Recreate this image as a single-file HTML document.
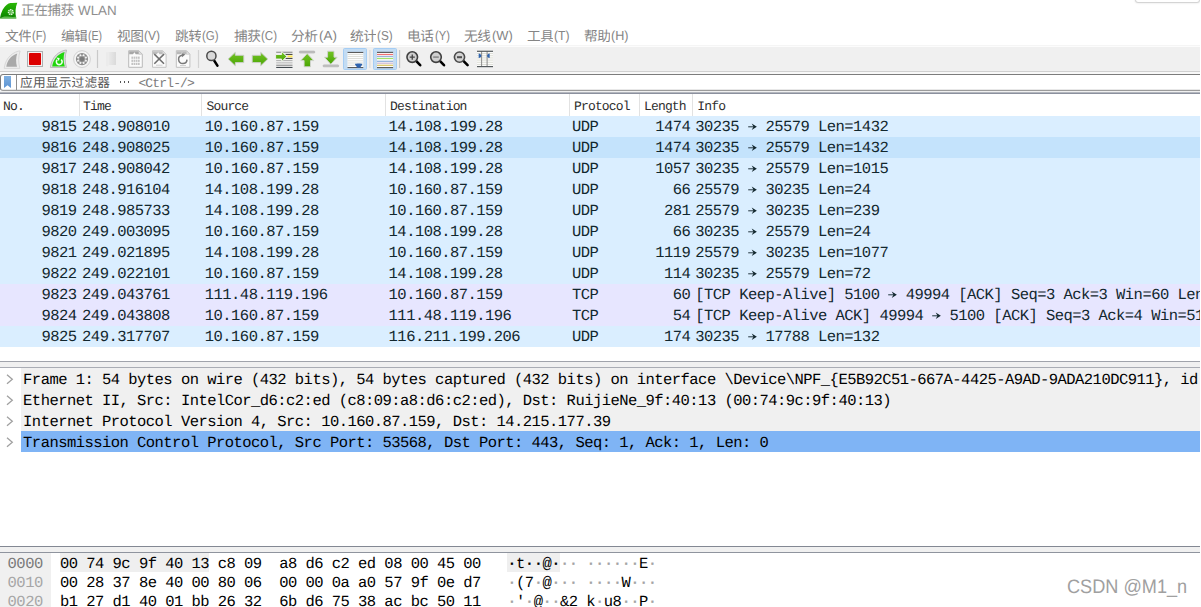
<!DOCTYPE html><html><head><meta charset="utf-8"><title>Wireshark</title><style>
*{box-sizing:border-box}
html,body{margin:0;padding:0;width:1201px;height:607px;overflow:hidden;background:#fff}
#r{position:absolute;left:0;top:0;width:1201px;height:607px;overflow:hidden;background:#fff}
body{width:1201px;height:607px;overflow:hidden;background:#fff;position:relative;font-family:"Liberation Sans",sans-serif;text-rendering:geometricPrecision}
.abs{position:absolute}
.m{font-family:"Liberation Mono",monospace;font-size:15.5px;letter-spacing:-0.535px;white-space:pre;position:absolute}
.h{font-family:"Liberation Mono",monospace;font-size:13px;letter-spacing:-0.84px;white-space:pre;position:absolute;color:#2e2e2e;top:99px;line-height:16px}
.row{position:absolute;left:0;width:1200px;height:21px;color:#12272e;overflow:hidden}
.row .m{top:0;line-height:21px;padding-top:1px}
.s{font-family:"Liberation Sans",sans-serif;position:absolute;white-space:pre}
svg text{font-family:"Liberation Sans","Noto Sans CJK SC",sans-serif}
</style></head><body><div id="r">
<svg style="position:absolute;left:21.3px;top:1.85px;" width="52.60" height="18.76" viewBox="0 -1000 3925.373134328358 1400" fill="#8e8e8e"><text x="0" y="0" font-size="1000" letter-spacing="-18.66" fill="#8e8e8e">正在捕获</text></svg>
<div class="s" style="left:78px;top:2px;font-size:13.4px;line-height:17px;color:#8e8e8e">WLAN</div>
<div class="abs" style="left:1135px;top:-8px;width:65px;height:10.5px;border:1px solid #d4d4d4;border-radius:3px;box-shadow:0 0 2px rgba(0,0,0,.15);background:#fff"></div>
<svg style="position:absolute;left:4.7px;top:26.50px;" width="26.66" height="19.74" viewBox="0 -1000 1890.7801418439717 1400" fill="#858585"><text x="0" y="0" font-size="1000" letter-spacing="-54.61" fill="#858585">文件</text></svg>
<div class="s" style="left:32.17px;top:26.6px;font-size:13.0px;line-height:17px;color:#858585;transform:scaleX(0.863);transform-origin:0 0">(F)</div>
<svg style="position:absolute;left:60.7px;top:26.50px;" width="26.66" height="19.74" viewBox="0 -1000 1890.7801418439717 1400" fill="#858585"><text x="0" y="0" font-size="1000" letter-spacing="-54.61" fill="#858585">编辑</text></svg>
<div class="s" style="left:88.17px;top:26.6px;font-size:13.0px;line-height:17px;color:#858585;transform:scaleX(0.815);transform-origin:0 0">(E)</div>
<svg style="position:absolute;left:116.9px;top:26.50px;" width="26.66" height="19.74" viewBox="0 -1000 1890.7801418439717 1400" fill="#858585"><text x="0" y="0" font-size="1000" letter-spacing="-54.61" fill="#858585">视图</text></svg>
<div class="s" style="left:144.37px;top:26.6px;font-size:13.0px;line-height:17px;color:#858585;transform:scaleX(0.925);transform-origin:0 0">(V)</div>
<svg style="position:absolute;left:174.6px;top:26.50px;" width="26.66" height="19.74" viewBox="0 -1000 1890.7801418439717 1400" fill="#858585"><text x="0" y="0" font-size="1000" letter-spacing="-54.61" fill="#858585">跳转</text></svg>
<div class="s" style="left:202.07px;top:26.6px;font-size:13.0px;line-height:17px;color:#858585;transform:scaleX(0.886);transform-origin:0 0">(G)</div>
<svg style="position:absolute;left:234.0px;top:26.50px;" width="26.66" height="19.74" viewBox="0 -1000 1890.7801418439717 1400" fill="#858585"><text x="0" y="0" font-size="1000" letter-spacing="-54.61" fill="#858585">捕获</text></svg>
<div class="s" style="left:261.47px;top:26.6px;font-size:13.0px;line-height:17px;color:#858585;transform:scaleX(0.888);transform-origin:0 0">(C)</div>
<svg style="position:absolute;left:291.09999999999997px;top:26.50px;" width="26.66" height="19.74" viewBox="0 -1000 1890.7801418439717 1400" fill="#858585"><text x="0" y="0" font-size="1000" letter-spacing="-54.61" fill="#858585">分析</text></svg>
<div class="s" style="left:318.57px;top:26.6px;font-size:13.0px;line-height:17px;color:#858585;transform:scaleX(1.035);transform-origin:0 0">(A)</div>
<svg style="position:absolute;left:349.7px;top:26.50px;" width="26.66" height="19.74" viewBox="0 -1000 1890.7801418439717 1400" fill="#858585"><text x="0" y="0" font-size="1000" letter-spacing="-54.61" fill="#858585">统计</text></svg>
<div class="s" style="left:377.17px;top:26.6px;font-size:13.0px;line-height:17px;color:#858585;transform:scaleX(0.908);transform-origin:0 0">(S)</div>
<svg style="position:absolute;left:407.3px;top:26.50px;" width="26.66" height="19.74" viewBox="0 -1000 1890.7801418439717 1400" fill="#858585"><text x="0" y="0" font-size="1000" letter-spacing="-54.61" fill="#858585">电话</text></svg>
<div class="s" style="left:434.77px;top:26.6px;font-size:13.0px;line-height:17px;color:#858585;transform:scaleX(0.862);transform-origin:0 0">(Y)</div>
<svg style="position:absolute;left:464.09999999999997px;top:26.50px;" width="26.66" height="19.74" viewBox="0 -1000 1890.7801418439717 1400" fill="#858585"><text x="0" y="0" font-size="1000" letter-spacing="-54.61" fill="#858585">无线</text></svg>
<div class="s" style="left:491.57px;top:26.6px;font-size:13.0px;line-height:17px;color:#858585;transform:scaleX(0.991);transform-origin:0 0">(W)</div>
<svg style="position:absolute;left:526.7px;top:26.50px;" width="26.66" height="19.74" viewBox="0 -1000 1890.7801418439717 1400" fill="#858585"><text x="0" y="0" font-size="1000" letter-spacing="-54.61" fill="#858585">工具</text></svg>
<div class="s" style="left:554.17px;top:26.6px;font-size:13.0px;line-height:17px;color:#858585;transform:scaleX(0.936);transform-origin:0 0">(T)</div>
<svg style="position:absolute;left:583.7px;top:26.50px;" width="26.66" height="19.74" viewBox="0 -1000 1890.7801418439717 1400" fill="#858585"><text x="0" y="0" font-size="1000" letter-spacing="-54.61" fill="#858585">帮助</text></svg>
<div class="s" style="left:611.17px;top:26.6px;font-size:13.0px;line-height:17px;color:#858585;transform:scaleX(0.971);transform-origin:0 0">(H)</div>
<div class="abs" style="left:0;top:45px;width:1200px;height:1px;background:#f5f5f5"></div>
<div class="abs" style="left:0;top:46px;width:1200px;height:1px;background:#fcfcfc"></div>
<div class="abs" style="left:0;top:47px;width:1200px;height:24px;background:#f0f0f0"></div>
<div class="abs" style="left:0;top:71px;width:1200px;height:1px;background:#d0d0d0"></div>
<svg class="abs" style="left:0;top:0" width="520" height="74" viewBox="0 0 520 74">
<defs>
<linearGradient id="gArrow" x1="0" y1="0" x2="0" y2="1"><stop offset="0" stop-color="#74c425"/><stop offset="1" stop-color="#4aa504"/></linearGradient>
<linearGradient id="gApp" x1="0" y1="0" x2="0" y2="1"><stop offset="0" stop-color="#2ab805"/><stop offset="0.75" stop-color="#119000"/><stop offset="1" stop-color="#0c7c00"/></linearGradient>
<linearGradient id="gFold" x1="0" y1="0" x2="1" y2="0"><stop offset="0" stop-color="#eaeaea"/><stop offset="1" stop-color="#dadada"/></linearGradient>
</defs>
<path d="M0 18.4C0.9 12.8 3.4 6.4 8.6 3.6C10 2.9 11 2.9 12 2.9L17.3 2.8C15.4 7.2 14.9 13 16.3 18.4Z" fill="url(#gApp)"/>
<path d="M0.3 18.4C2 16.6 5 16.2 8 16.6C11 17 14 17.2 16.2 16.6L16.3 18.4Z" fill="#7bd06a" opacity="0.75"/>
<circle cx="10.8" cy="12.1" r="2.35" fill="none" stroke="#e6f6e0" stroke-width="1.5" stroke-dasharray="1.35 0.5"/>
<circle cx="10.8" cy="12" r="1.1" fill="none" stroke="#d8f0d0" stroke-width="0.6"/>
<path d="M4.2 68.4C5 61 9.5 53.5 18.5 51.1L20.1 51C18.3 56.5 18.2 62.5 19.9 68.4Z" fill="#ededed" stroke="#d8d8d8" stroke-width="1"/>
<path d="M6.3 66.8C7.2 61 10.6 55.8 17.2 53.6C15.8 58 15.8 62.5 17 66.8Z" fill="#a9a9a9"/>
<rect x="27.5" y="51.5" width="15" height="15" fill="#f7eeee" stroke="#acb0b0" stroke-width="1"/>
<rect x="29" y="53" width="12" height="12" rx="0.8" fill="#dc0000"/>
<path d="M50.4 67.5C51.2 60 55.5 52.5 65 50.2L66.6 50.1C64.8 55.5 64.7 61.5 66.4 67.5Z" fill="#dedede" stroke="#bcbcbc" stroke-width="1"/>
<path d="M52.2 66.6C53.1 60.5 56.6 54.4 64.6 52C63.2 56.8 63.3 61.8 64.8 66.6Z" fill="#20d60c"/>
<path d="M61.2 59.6A2.9 2.9 0 1 1 57.2 59.7" fill="none" stroke="#f2fff0" stroke-width="1.55"/>
<path d="M56.3 57.6L59.6 57.9L58.9 61Z" fill="#f2fff0"/>
<circle cx="82" cy="59.1" r="8.4" fill="#f5f5f5" stroke="#d2d2d2" stroke-width="1"/>
<circle cx="82" cy="59.1" r="6.1" fill="#8d8d8d"/>
<circle cx="82" cy="59.1" r="3.5" fill="none" stroke="#b4b4b4" stroke-width="1.4"/>
<circle cx="85.97" cy="60.75" r="0.95" fill="#f6f6f6"/>
<circle cx="83.65" cy="63.07" r="0.95" fill="#f6f6f6"/>
<circle cx="80.35" cy="63.07" r="0.95" fill="#f6f6f6"/>
<circle cx="78.03" cy="60.75" r="0.95" fill="#f6f6f6"/>
<circle cx="78.03" cy="57.45" r="0.95" fill="#f6f6f6"/>
<circle cx="80.35" cy="55.13" r="0.95" fill="#f6f6f6"/>
<circle cx="83.65" cy="55.13" r="0.95" fill="#f6f6f6"/>
<circle cx="85.97" cy="57.45" r="0.95" fill="#f6f6f6"/>
<circle cx="82" cy="59.1" r="2.2" fill="#7a7a7a"/>
<rect x="96.9" y="50" width="1.2" height="18" fill="#c9c9c9"/>
<rect x="197.9" y="50" width="1.2" height="18" fill="#d2d2d2"/>
<rect x="369.29999999999995" y="50" width="1.2" height="18" fill="#dcdcdc"/>
<rect x="399.0" y="50" width="1.2" height="18" fill="#c6c6c6"/>
<path d="M108.6 52H116V65H108.8Z" fill="url(#gFold)"/>
<path d="M106 52.3L108.8 52V65L107.6 66.6L106 66Z" fill="#ebebeb"/>
<path d="M128.7 50.7H138.79999999999998L142.29999999999998 54.2V67.3H128.7Z" fill="#fbfbfb" stroke="#bababa" stroke-width="1"/>
<path d="M129.2 51.2H138.6L141.6 54.2H135.79999999999998L134.39999999999998 52.2L133.0 54.2H129.2Z" fill="#a6a6a6"/>
<path d="M138.79999999999998 50.9V54.1H142.1Z" fill="#e8e8e8" stroke="#bababa" stroke-width="0.6"/>
<rect x="131.4" y="56.6" width="1.7" height="2.2" fill="#c3c3c3"/>
<rect x="133.6" y="56.6" width="1.7" height="2.2" fill="#c3c3c3"/>
<rect x="135.8" y="56.6" width="1.7" height="2.2" fill="#c3c3c3"/>
<rect x="138.0" y="56.6" width="1.7" height="2.2" fill="#c3c3c3"/>
<rect x="131.4" y="59.7" width="1.7" height="2.2" fill="#c3c3c3"/>
<rect x="133.6" y="59.7" width="1.7" height="2.2" fill="#c3c3c3"/>
<rect x="135.8" y="59.7" width="1.7" height="2.2" fill="#c3c3c3"/>
<rect x="138.0" y="59.7" width="1.7" height="2.2" fill="#c3c3c3"/>
<rect x="131.4" y="62.8" width="1.7" height="2.2" fill="#c3c3c3"/>
<rect x="133.6" y="62.8" width="1.7" height="2.2" fill="#c3c3c3"/>
<rect x="135.8" y="62.8" width="1.7" height="2.2" fill="#c3c3c3"/>
<rect x="138.0" y="62.8" width="1.7" height="2.2" fill="#c3c3c3"/>
<path d="M152.5 50.7H162.6L166.1 54.2V67.3H152.5Z" fill="#fbfbfb" stroke="#c4c4c4" stroke-width="1"/>
<path d="M153 51.2H162.4L165.4 54.2H159.6L158.2 52.2L156.8 54.2H153Z" fill="#bdbdbd"/>
<path d="M162.6 50.9V54.1H165.9Z" fill="#e8e8e8" stroke="#c4c4c4" stroke-width="0.6"/>
<path d="M154.3 54.1L164 63.7M164 54.1L154.3 63.7" stroke="#6e6e6e" stroke-width="1.5" fill="none"/>
<path d="M156 65.2H162.5" stroke="#d0d0d0" stroke-width="1"/>
<path d="M176.3 50.7H186.4L189.9 54.2V67.3H176.3Z" fill="#fbfbfb" stroke="#c0c0c0" stroke-width="1"/>
<path d="M176.8 51.2H186.20000000000002L189.20000000000002 54.2H183.4L182.0 52.2L180.60000000000002 54.2H176.8Z" fill="#b8b8b8"/>
<path d="M186.4 50.9V54.1H189.70000000000002Z" fill="#e8e8e8" stroke="#c0c0c0" stroke-width="0.6"/>
<path d="M187 59.6A4.2 4.2 0 1 1 182 55.2" fill="none" stroke="#7a7a7a" stroke-width="1.5"/>
<path d="M181.6 52.9L185.4 54.6L182 57.2Z" fill="#7a7a7a"/>
<path d="M180 65.5H186" stroke="#d0d0d0" stroke-width="1"/>
<path d="M214.2 60.6L217.4 65.6" stroke="#000" stroke-width="2.6" stroke-linecap="round"/>
<circle cx="211.4" cy="55.9" r="4.6" fill="#d9d9d9" stroke="#4a4a4a" stroke-width="1.5"/>
<path d="M228.2 59.1L235.3 52.3V55.3H243.8V62.6H235.3V65.8Z" fill="url(#gArrow)" stroke="#cfcfcf" stroke-width="0.9" stroke-linejoin="round"/>
<path d="M267.8 59.1L260.7 52.3V55.3H252.2V62.6H260.7V65.8Z" fill="url(#gArrow)" stroke="#cfcfcf" stroke-width="0.9" stroke-linejoin="round"/>
<rect x="276.2" y="51.7" width="16.3" height="1.1" fill="#8a8a8a"/>
<rect x="285.5" y="53.9" width="7" height="1.1" fill="#4c4c4c"/>
<rect x="287.5" y="55.5" width="5" height="1.8" fill="#ffe84a"/>
<rect x="285.5" y="57.9" width="7" height="1.1" fill="#4c4c4c"/>
<rect x="276.2" y="60" width="16.3" height="1.1" fill="#b4b4b4"/>
<rect x="276.2" y="62.3" width="16.3" height="1.1" fill="#bbbbbb"/>
<rect x="276.2" y="64.7" width="16.3" height="1.1" fill="#8e8e8e"/>
<rect x="276.2" y="66.9" width="16.3" height="1.1" fill="#434a50"/>
<path d="M286.8 56.5L281.6 51.4V54.5H275.6V59H281.6V61.6Z" fill="url(#gArrow)" stroke="#f2f2f2" stroke-width="0.9" stroke-linejoin="round"/>
<rect x="299.4" y="51.1" width="15.3" height="1.9" rx="0.6" fill="#c4c4c4" stroke="#a8a8a8" stroke-width="0.6"/>
<path d="M307.2 53.6L313.7 60.6H310.5V66.8H304.1V60.6H300.8Z" fill="url(#gArrow)" stroke="#d4d4d4" stroke-width="0.9" stroke-linejoin="round"/>
<rect x="323.2" y="64.9" width="15.4" height="1.9" rx="0.6" fill="#c4c4c4" stroke="#a8a8a8" stroke-width="0.6"/>
<path d="M330.8 64.3L337.2 57.2H334V51.2H327.6V57.2H324.4Z" fill="url(#gArrow)" stroke="#d4d4d4" stroke-width="0.9" stroke-linejoin="round"/>
<rect x="343.5" y="48.5" width="23" height="21" rx="1" fill="#c3dcf3" stroke="#a5cdf4" stroke-width="1"/>
<rect x="347.5" y="52" width="15.8" height="15.6" fill="#fdfdfd"/>
<rect x="347.5" y="53.9" width="15.8" height="1" fill="#dedfd9"/>
<rect x="347.5" y="56.0" width="15.8" height="1" fill="#dedfd9"/>
<rect x="347.5" y="58.0" width="15.8" height="1" fill="#dedfd9"/>
<rect x="347.5" y="60.3" width="15.8" height="1" fill="#dedfd9"/>
<rect x="347.5" y="62.5" width="15.8" height="1" fill="#dedfd9"/>
<rect x="347.5" y="64.7" width="15.8" height="1" fill="#dedfd9"/>
<rect x="347.5" y="51.9" width="15.8" height="1.1" fill="#5a5a5a"/>
<rect x="347.5" y="67" width="15.8" height="1.1" fill="#5a5a5a"/>
<path d="M355 64.2C355 63.4 362.3 63.4 362.3 64.2C362.3 65.4 360.6 66 360.2 67.7H357.2C356.8 66 355 65.4 355 64.2Z" fill="#2f63ae"/>
<rect x="373.5" y="48.5" width="23" height="21" rx="1" fill="#c3dcf3" stroke="#a5cdf4" stroke-width="1"/>
<rect x="377" y="52" width="16.1" height="15.6" fill="#fdfdfd"/>
<rect x="377" y="51.8" width="16.1" height="1.2" fill="#5e5e5e"/>
<rect x="377" y="53.9" width="16.1" height="1.2" fill="#f07272"/>
<rect x="377" y="55.9" width="16.1" height="1.2" fill="#9db2d9"/>
<rect x="377" y="57.9" width="16.1" height="1.2" fill="#a3e26b"/>
<rect x="377" y="60.699999999999996" width="16.1" height="1.2" fill="#8faedb"/>
<rect x="377" y="62.6" width="16.1" height="1.2" fill="#cdb7d2"/>
<rect x="377" y="64.7" width="16.1" height="1.2" fill="#d9c25f"/>
<rect x="377" y="67.0" width="16.1" height="1.2" fill="#5e5e5e"/>
<path d="M416.3 61.2L420.2 65.2" stroke="#000" stroke-width="2.6" stroke-linecap="round"/>
<circle cx="412.25" cy="57.1" r="5.3" fill="#d0d0d0" stroke="#404040" stroke-width="1.6"/>
<path d="M409.7 57.1H414.8M412.25 54.6V59.7" stroke="#454545" stroke-width="1.3"/>
<path d="M440.1 61.2L444 65.2" stroke="#000" stroke-width="2.6" stroke-linecap="round"/>
<circle cx="436" cy="57.1" r="5.3" fill="#d0d0d0" stroke="#404040" stroke-width="1.6"/>
<path d="M433.2 57.1H438.8" stroke="#858585" stroke-width="1.5"/>
<path d="M463.6 61.2L467.6 65.2" stroke="#000" stroke-width="2.6" stroke-linecap="round"/>
<circle cx="459.5" cy="57.1" r="5.1" fill="#d4d4d4" stroke="#4a4a4a" stroke-width="1.6"/>
<path d="M457 57.2H462" stroke="#505050" stroke-width="2"/>
<rect x="477" y="51" width="16" height="16" fill="#fbfbfa"/>
<rect x="477" y="53.0" width="16" height="1" fill="#dedfd8"/>
<rect x="477" y="55.2" width="16" height="1" fill="#dedfd8"/>
<rect x="477" y="57.4" width="16" height="1" fill="#dedfd8"/>
<rect x="477" y="59.6" width="16" height="1" fill="#dedfd8"/>
<rect x="477" y="61.8" width="16" height="1" fill="#dedfd8"/>
<rect x="477" y="64.0" width="16" height="1" fill="#dedfd8"/>
<rect x="481.1" y="51" width="1" height="16" fill="#8c8c8c"/>
<rect x="486.6" y="51" width="1" height="16" fill="#8c8c8c"/>
<rect x="477" y="50.7" width="16" height="1.2" fill="#565b5e"/>
<rect x="477" y="66" width="16" height="1.2" fill="#565b5e"/>
<path d="M478.7 53.4C480.6 53.6 481.3 54.8 481.3 55.7C481.3 56.8 480.6 57.8 478.7 58Z" fill="#2f63ae"/>
<path d="M489.7 53.4C487.8 53.6 487.1 54.8 487.1 55.7C487.1 56.8 487.8 57.8 489.7 58Z" fill="#2f63ae"/>
</svg>
<div class="abs" style="left:0;top:72px;width:1200px;height:2px;background:#f8f8f8"></div>
<div class="abs" style="left:0;top:89px;width:1200px;height:1px;background:#e8e8e8"></div>
<div class="abs" style="left:0;top:91px;width:1200px;height:1px;background:#f0f0f0"></div>
<div class="abs" style="left:0;top:74px;width:1204px;height:17px;border:1px solid #7c7c7c;border-bottom-color:#9b9b9b;border-radius:3px 0 0 3px"></div>
<div class="abs" style="left:15.5px;top:75px;width:1px;height:15px;background:#8e8e8e"></div>
<svg class="abs" style="left:4px;top:76px" width="7" height="12" viewBox="0 0 7 12"><defs><linearGradient id="bk" x1="0" y1="0" x2="0" y2="1"><stop offset="0" stop-color="#7fb0e2"/><stop offset="1" stop-color="#5e94d2"/></linearGradient></defs><path d="M0 0H7V12L3.5 9.2L0 12Z" fill="url(#bk)"/></svg>
<svg style="position:absolute;left:19.8px;top:74.10px;" width="90.30" height="18.06" viewBox="0 -1000 7000 1400" fill="#595959"><text x="0" y="0" font-size="1000" fill="#595959">应用显示过滤器</text></svg>
<div class="m" style="left:138.4px;top:76px;font-size:13px;letter-spacing:-0.85px;line-height:16px;color:#7c7c7c">&lt;Ctrl-/&gt;</div>
<div class="abs" style="left:119.60px;top:81.2px;width:1.4px;height:1.4px;background:#555"></div>
<div class="abs" style="left:123.65px;top:81.2px;width:1.4px;height:1.4px;background:#555"></div>
<div class="abs" style="left:127.70px;top:81.2px;width:1.4px;height:1.4px;background:#555"></div>
<div class="abs" style="left:0;top:92px;width:1200px;height:1px;background:#b4b7be"></div>
<div class="abs" style="left:0;top:93px;width:1200px;height:1px;background:#8b909e"></div>
<div class="abs" style="left:79px;top:94px;width:1px;height:22px;background:#e2e2e2"></div>
<div class="abs" style="left:201px;top:94px;width:1px;height:22px;background:#e2e2e2"></div>
<div class="abs" style="left:385px;top:94px;width:1px;height:22px;background:#e2e2e2"></div>
<div class="abs" style="left:569px;top:94px;width:1px;height:22px;background:#e2e2e2"></div>
<div class="abs" style="left:639px;top:94px;width:1px;height:22px;background:#e2e2e2"></div>
<div class="abs" style="left:692px;top:94px;width:1px;height:22px;background:#e2e2e2"></div>
<div class="h" style="left:3px">No.</div>
<div class="h" style="left:83px">Time</div>
<div class="h" style="left:206.5px">Source</div>
<div class="h" style="left:390px">Destination</div>
<div class="h" style="left:574px">Protocol</div>
<div class="h" style="left:644px">Length</div>
<div class="h" style="left:697.3px">Info</div>
<div class="row" style="top:116px;background:#daeeff"><div class="m" style="left:41.54px">9815</div><div class="m" style="left:82.1px">248.908010</div><div class="m" style="left:204.8px">10.160.87.159</div><div class="m" style="left:388.6px">14.108.199.28</div><div class="m" style="left:572px">UDP</div><div class="m" style="left:655.14px">1474</div><div class="m" style="left:695.3px">30235   25579 Len=1432</div><svg class="abs" style="left:747.89px;top:6px" width="9" height="10" viewBox="0 0 9 10"><path d="M0.2 4.75H6.2" stroke="#4d5f6a" stroke-width="1.3" fill="none"/><path d="M3.7 1.6L8.85 4.75L3.7 7.9L5.5 4.75Z" fill="#12272e"/></svg></div>
<div class="row" style="top:137px;background:#c4e3fc"><div class="m" style="left:41.54px">9816</div><div class="m" style="left:82.1px">248.908025</div><div class="m" style="left:204.8px">10.160.87.159</div><div class="m" style="left:388.6px">14.108.199.28</div><div class="m" style="left:572px">UDP</div><div class="m" style="left:655.14px">1474</div><div class="m" style="left:695.3px">30235   25579 Len=1432</div><svg class="abs" style="left:747.89px;top:6px" width="9" height="10" viewBox="0 0 9 10"><path d="M0.2 4.75H6.2" stroke="#4d5f6a" stroke-width="1.3" fill="none"/><path d="M3.7 1.6L8.85 4.75L3.7 7.9L5.5 4.75Z" fill="#12272e"/></svg></div>
<div class="row" style="top:158px;background:#daeeff"><div class="m" style="left:41.54px">9817</div><div class="m" style="left:82.1px">248.908042</div><div class="m" style="left:204.8px">10.160.87.159</div><div class="m" style="left:388.6px">14.108.199.28</div><div class="m" style="left:572px">UDP</div><div class="m" style="left:655.14px">1057</div><div class="m" style="left:695.3px">30235   25579 Len=1015</div><svg class="abs" style="left:747.89px;top:6px" width="9" height="10" viewBox="0 0 9 10"><path d="M0.2 4.75H6.2" stroke="#4d5f6a" stroke-width="1.3" fill="none"/><path d="M3.7 1.6L8.85 4.75L3.7 7.9L5.5 4.75Z" fill="#12272e"/></svg></div>
<div class="row" style="top:179px;background:#daeeff"><div class="m" style="left:41.54px">9818</div><div class="m" style="left:82.1px">248.916104</div><div class="m" style="left:204.8px">14.108.199.28</div><div class="m" style="left:388.6px">10.160.87.159</div><div class="m" style="left:572px">UDP</div><div class="m" style="left:672.67px">66</div><div class="m" style="left:695.3px">25579   30235 Len=24</div><svg class="abs" style="left:747.89px;top:6px" width="9" height="10" viewBox="0 0 9 10"><path d="M0.2 4.75H6.2" stroke="#4d5f6a" stroke-width="1.3" fill="none"/><path d="M3.7 1.6L8.85 4.75L3.7 7.9L5.5 4.75Z" fill="#12272e"/></svg></div>
<div class="row" style="top:200px;background:#daeeff"><div class="m" style="left:41.54px">9819</div><div class="m" style="left:82.1px">248.985733</div><div class="m" style="left:204.8px">14.108.199.28</div><div class="m" style="left:388.6px">10.160.87.159</div><div class="m" style="left:572px">UDP</div><div class="m" style="left:663.91px">281</div><div class="m" style="left:695.3px">25579   30235 Len=239</div><svg class="abs" style="left:747.89px;top:6px" width="9" height="10" viewBox="0 0 9 10"><path d="M0.2 4.75H6.2" stroke="#4d5f6a" stroke-width="1.3" fill="none"/><path d="M3.7 1.6L8.85 4.75L3.7 7.9L5.5 4.75Z" fill="#12272e"/></svg></div>
<div class="row" style="top:221px;background:#daeeff"><div class="m" style="left:41.54px">9820</div><div class="m" style="left:82.1px">249.003095</div><div class="m" style="left:204.8px">10.160.87.159</div><div class="m" style="left:388.6px">14.108.199.28</div><div class="m" style="left:572px">UDP</div><div class="m" style="left:672.67px">66</div><div class="m" style="left:695.3px">30235   25579 Len=24</div><svg class="abs" style="left:747.89px;top:6px" width="9" height="10" viewBox="0 0 9 10"><path d="M0.2 4.75H6.2" stroke="#4d5f6a" stroke-width="1.3" fill="none"/><path d="M3.7 1.6L8.85 4.75L3.7 7.9L5.5 4.75Z" fill="#12272e"/></svg></div>
<div class="row" style="top:242px;background:#daeeff"><div class="m" style="left:41.54px">9821</div><div class="m" style="left:82.1px">249.021895</div><div class="m" style="left:204.8px">14.108.199.28</div><div class="m" style="left:388.6px">10.160.87.159</div><div class="m" style="left:572px">UDP</div><div class="m" style="left:655.14px">1119</div><div class="m" style="left:695.3px">25579   30235 Len=1077</div><svg class="abs" style="left:747.89px;top:6px" width="9" height="10" viewBox="0 0 9 10"><path d="M0.2 4.75H6.2" stroke="#4d5f6a" stroke-width="1.3" fill="none"/><path d="M3.7 1.6L8.85 4.75L3.7 7.9L5.5 4.75Z" fill="#12272e"/></svg></div>
<div class="row" style="top:263px;background:#daeeff"><div class="m" style="left:41.54px">9822</div><div class="m" style="left:82.1px">249.022101</div><div class="m" style="left:204.8px">10.160.87.159</div><div class="m" style="left:388.6px">14.108.199.28</div><div class="m" style="left:572px">UDP</div><div class="m" style="left:663.91px">114</div><div class="m" style="left:695.3px">30235   25579 Len=72</div><svg class="abs" style="left:747.89px;top:6px" width="9" height="10" viewBox="0 0 9 10"><path d="M0.2 4.75H6.2" stroke="#4d5f6a" stroke-width="1.3" fill="none"/><path d="M3.7 1.6L8.85 4.75L3.7 7.9L5.5 4.75Z" fill="#12272e"/></svg></div>
<div class="row" style="top:284px;background:#e7e6ff"><div class="m" style="left:41.54px">9823</div><div class="m" style="left:82.1px">249.043761</div><div class="m" style="left:204.8px">111.48.119.196</div><div class="m" style="left:388.6px">10.160.87.159</div><div class="m" style="left:572px">TCP</div><div class="m" style="left:672.67px">60</div><div class="m" style="left:695.3px">[TCP Keep-Alive] 5100   49994 [ACK] Seq=3 Ack=3 Win=60 Len=0</div><svg class="abs" style="left:888.13px;top:6px" width="9" height="10" viewBox="0 0 9 10"><path d="M0.2 4.75H6.2" stroke="#4d5f6a" stroke-width="1.3" fill="none"/><path d="M3.7 1.6L8.85 4.75L3.7 7.9L5.5 4.75Z" fill="#12272e"/></svg></div>
<div class="row" style="top:305px;background:#e7e6ff"><div class="m" style="left:41.54px">9824</div><div class="m" style="left:82.1px">249.043808</div><div class="m" style="left:204.8px">10.160.87.159</div><div class="m" style="left:388.6px">111.48.119.196</div><div class="m" style="left:572px">TCP</div><div class="m" style="left:672.67px">54</div><div class="m" style="left:695.3px">[TCP Keep-Alive ACK] 49994   5100 [ACK] Seq=3 Ack=4 Win=513 Len=0</div><svg class="abs" style="left:931.95px;top:6px" width="9" height="10" viewBox="0 0 9 10"><path d="M0.2 4.75H6.2" stroke="#4d5f6a" stroke-width="1.3" fill="none"/><path d="M3.7 1.6L8.85 4.75L3.7 7.9L5.5 4.75Z" fill="#12272e"/></svg></div>
<div class="row" style="top:326px;background:#daeeff"><div class="m" style="left:41.54px">9825</div><div class="m" style="left:82.1px">249.317707</div><div class="m" style="left:204.8px">10.160.87.159</div><div class="m" style="left:388.6px">116.211.199.206</div><div class="m" style="left:572px">UDP</div><div class="m" style="left:663.91px">174</div><div class="m" style="left:695.3px">30235   17788 Len=132</div><svg class="abs" style="left:747.89px;top:6px" width="9" height="10" viewBox="0 0 9 10"><path d="M0.2 4.75H6.2" stroke="#4d5f6a" stroke-width="1.3" fill="none"/><path d="M3.7 1.6L8.85 4.75L3.7 7.9L5.5 4.75Z" fill="#12272e"/></svg></div>
<div class="abs" style="left:0;top:361px;width:1200px;height:7px;background:#f0f0f0;border-top:1px solid #a0a3ab;border-bottom:1px solid #a9acb4"></div>
<div class="abs" style="left:21px;top:368px;width:1179px;height:21px;background:#f0f0f0;overflow:hidden;color:#000"><div class="m" style="left:2.1px;top:0;line-height:21px;padding-top:2px">Frame 1: 54 bytes on wire (432 bits), 54 bytes captured (432 bits) on interface \Device\NPF_{E5B92C51-667A-4425-A9AD-9ADA210DC911}, id 0</div></div>
<svg class="abs" style="left:6px;top:374px" width="8" height="11" viewBox="0 0 8 11"><path d="M1 0.8L6.3 5.3L1 9.8" fill="none" stroke="#a0a0a0" stroke-width="1.3"/></svg>
<div class="abs" style="left:21px;top:389px;width:1179px;height:21px;background:#f0f0f0;overflow:hidden;color:#000"><div class="m" style="left:2.1px;top:0;line-height:21px;padding-top:2px">Ethernet II, Src: IntelCor_d6:c2:ed (c8:09:a8:d6:c2:ed), Dst: RuijieNe_9f:40:13 (00:74:9c:9f:40:13)</div></div>
<svg class="abs" style="left:6px;top:395px" width="8" height="11" viewBox="0 0 8 11"><path d="M1 0.8L6.3 5.3L1 9.8" fill="none" stroke="#a0a0a0" stroke-width="1.3"/></svg>
<div class="abs" style="left:21px;top:410px;width:1179px;height:21px;background:#f0f0f0;overflow:hidden;color:#000"><div class="m" style="left:2.1px;top:0;line-height:21px;padding-top:2px">Internet Protocol Version 4, Src: 10.160.87.159, Dst: 14.215.177.39</div></div>
<svg class="abs" style="left:6px;top:416px" width="8" height="11" viewBox="0 0 8 11"><path d="M1 0.8L6.3 5.3L1 9.8" fill="none" stroke="#a0a0a0" stroke-width="1.3"/></svg>
<div class="abs" style="left:21px;top:431px;width:1179px;height:21px;background:#7fb4f5;overflow:hidden;color:#000"><div class="m" style="left:2.1px;top:0;line-height:21px;padding-top:2px">Transmission Control Protocol, Src Port: 53568, Dst Port: 443, Seq: 1, Ack: 1, Len: 0</div></div>
<svg class="abs" style="left:6px;top:437px" width="8" height="11" viewBox="0 0 8 11"><path d="M1 0.8L6.3 5.3L1 9.8" fill="none" stroke="#a0a0a0" stroke-width="1.3"/></svg>
<div class="abs" style="left:0;top:546px;width:1200px;height:7px;background:#f0f0f0;border-top:1px solid #838893;border-bottom:1px solid #8f949e"></div>
<div class="abs" style="left:0;top:553px;width:51px;height:54px;background:#f0f0f0"></div>
<div class="abs" style="left:60px;top:553px;width:149px;height:19px;background:#efefef"></div>
<div class="abs" style="left:507px;top:553px;width:53px;height:19px;background:#efefef"></div>
<div class="m" style="left:7.6px;top:553px;line-height:19px;padding-top:2px;color:#7a7a7a">0000</div>
<div class="m" style="left:60px;top:553px;line-height:19px;padding-top:2px;color:#000">00 74 9c 9f 40 13 c8 09  a8 d6 c2 ed 08 00 45 00</div>
<div class="m" style="left:507.3px;top:553px;line-height:19px;padding-top:2px;color:#000"><b>·</b>t<b>·</b><b>·</b>@<b>·</b><b style="color:#a4a4a4">·</b><b style="color:#a4a4a4">·</b> <b style="color:#a4a4a4">·</b><b style="color:#a4a4a4">·</b><b style="color:#a4a4a4">·</b><b style="color:#a4a4a4">·</b><b style="color:#a4a4a4">·</b><b style="color:#a4a4a4">·</b>E<b style="color:#a4a4a4">·</b></div>
<div class="m" style="left:7.6px;top:572px;line-height:19px;padding-top:2px;color:#a6a6a6">0010</div>
<div class="m" style="left:60px;top:572px;line-height:19px;padding-top:2px;color:#000">00 28 37 8e 40 00 80 06  00 00 0a a0 57 9f 0e d7</div>
<div class="m" style="left:507.3px;top:572px;line-height:19px;padding-top:2px;color:#000"><b style="color:#a4a4a4">·</b>(7<b style="color:#a4a4a4">·</b>@<b style="color:#a4a4a4">·</b><b style="color:#a4a4a4">·</b><b style="color:#a4a4a4">·</b> <b style="color:#a4a4a4">·</b><b style="color:#a4a4a4">·</b><b style="color:#a4a4a4">·</b><b style="color:#a4a4a4">·</b>W<b style="color:#a4a4a4">·</b><b style="color:#a4a4a4">·</b><b style="color:#a4a4a4">·</b></div>
<div class="m" style="left:7.6px;top:591px;line-height:19px;padding-top:2px;color:#a6a6a6">0020</div>
<div class="m" style="left:60px;top:591px;line-height:19px;padding-top:2px;color:#000">b1 27 d1 40 01 bb 26 32  6b d6 75 38 ac bc 50 11</div>
<div class="m" style="left:507.3px;top:591px;line-height:19px;padding-top:2px;color:#000"><b style="color:#a4a4a4">·</b>&#x27;<b style="color:#a4a4a4">·</b>@<b style="color:#a4a4a4">·</b><b style="color:#a4a4a4">·</b>&amp;2 k<b style="color:#a4a4a4">·</b>u8<b style="color:#a4a4a4">·</b><b style="color:#a4a4a4">·</b>P<b style="color:#a4a4a4">·</b></div>
<div class="s" style="left:1066.5px;top:576.1px;font-size:19.5px;line-height:22px;color:#a0a0a0;transform:scaleX(0.93);transform-origin:0 0">CSDN @M1_n</div>
<div class="abs" style="left:1200px;top:0;width:1px;height:607px;background:#fff"></div>
</div></body></html>
